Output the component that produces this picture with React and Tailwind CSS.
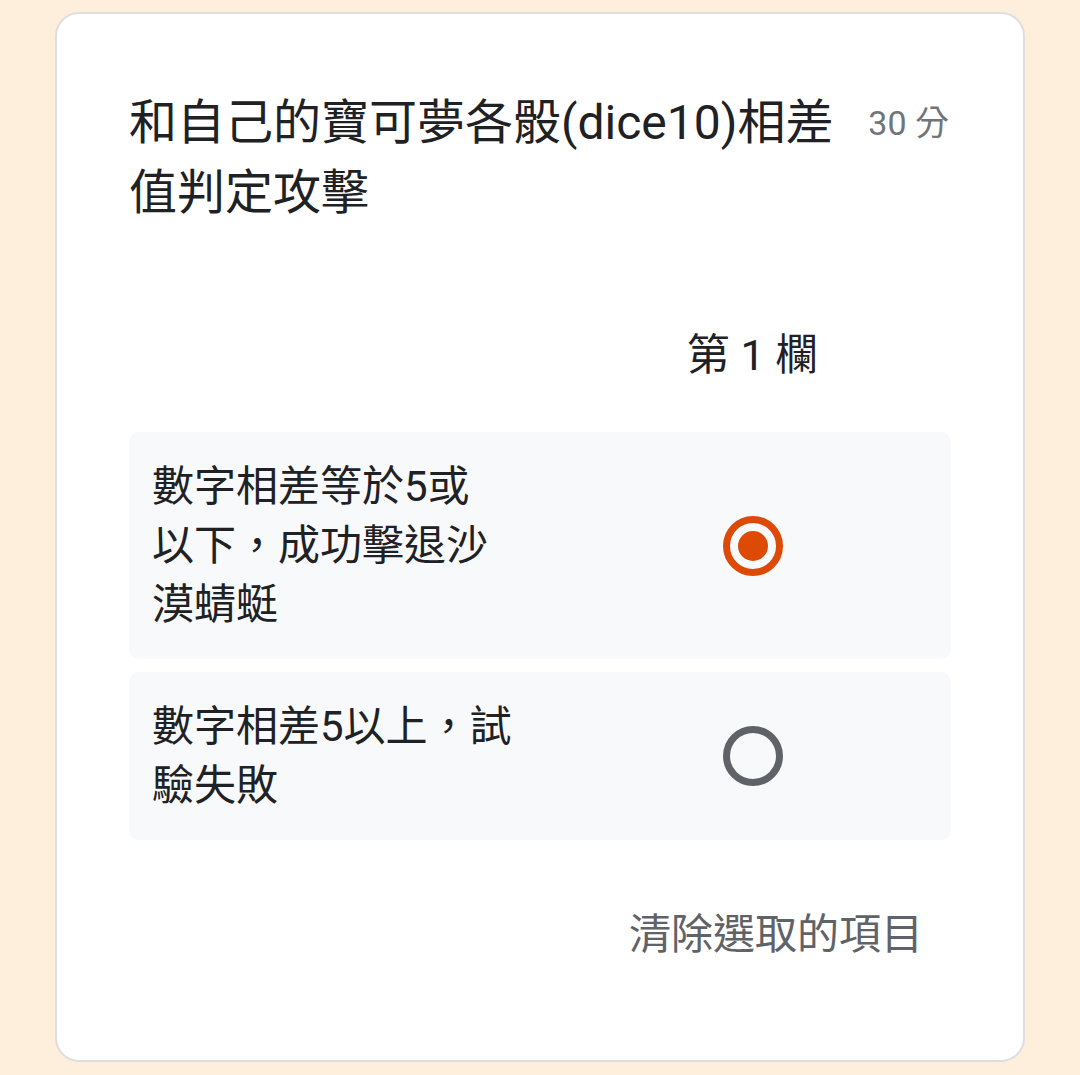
import React, { useState } from "react";

const options = [
  { id: "a", lines: ["數字相差等於5或", "以下，成功擊退沙", "漠蜻蜓"] },
  { id: "b", lines: ["數字相差5以上，試", "驗失敗"] },
];

const Radio = ({ checked }) => (
  <div
    className={
      checked
        ? "w-[60px] h-[60px] rounded-full border-[7px] border-[#dd4a06] flex items-center justify-center"
        : "w-[60px] h-[60px] rounded-full border-[7px] border-[#5f6368]"
    }
  >
    {checked && <div className="w-[30px] h-[30px] rounded-full bg-[#dd4a06]" />}
  </div>
);

const App = () => {
  const [selected, setSelected] = useState("a");

  return (
    <div
      className="min-h-screen bg-[#fdefdb] pl-[55px] pt-[12px]"
      style={{ fontFamily: "Roboto, 'Noto Sans CJK TC', sans-serif" }}
    >
      <div className="w-[970px] h-[1050px] bg-white border-2 border-[#dedede] rounded-[24px] px-[72px] pt-[74px] flex flex-col">
        {/* question title + points */}
        <div className="flex justify-between items-start">
          <h1 className="w-[730px] text-[48px] leading-[70px] text-[#202124] font-normal">
            和自己的寶可夢各骰(dice10)相差
            <br />
            值判定攻擊
          </h1>
          <span className="text-[34px] leading-[70px] text-[#70757a] whitespace-nowrap pr-[2px]">
            30 分
          </span>
        </div>

        {/* grid header */}
        <div className="grid grid-cols-[425px_1fr] mt-[97px]">
          <div />
          <div className="text-center text-[43px] leading-[60px] text-[#202124]">第 1 欄</div>
        </div>

        {/* rows */}
        <div className="flex flex-col gap-[13px] mt-[47px]">
          {options.map((opt) => (
            <div
              key={opt.id}
              onClick={() => setSelected(opt.id)}
              className="grid grid-cols-[425px_1fr] bg-[#f8f9fa] rounded-[10px] py-[25px] cursor-pointer"
            >
              <div className="pl-[23px] text-[42px] leading-[59px] text-[#202124]">
                {opt.lines.map((line, i) => (
                  <div key={i} className="whitespace-nowrap">
                    {line}
                  </div>
                ))}
              </div>
              <div className="flex items-center justify-center">
                <Radio checked={selected === opt.id} />
              </div>
            </div>
          ))}
        </div>

        {/* clear selection */}
        <div className="flex justify-end mt-[65px]">
          <button
            type="button"
            onClick={() => setSelected(null)}
            className="px-[28px] text-[42px] leading-[60px] text-[#5f6368]"
          >
            清除選取的項目
          </button>
        </div>
      </div>
    </div>
  );
};

export default App;
